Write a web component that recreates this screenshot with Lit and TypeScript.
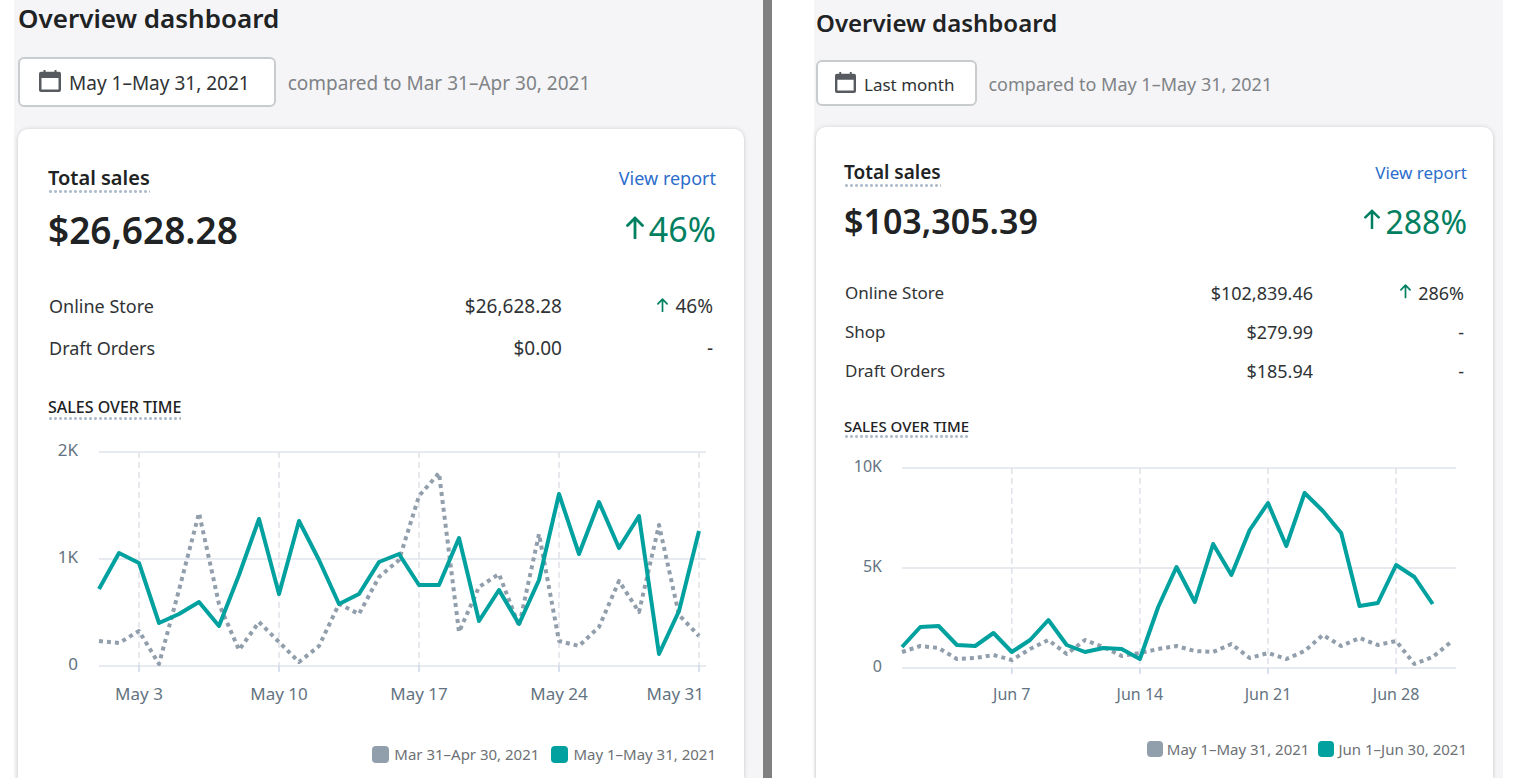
import { LitElement, html, svg, css } from "lit";
import { customElement, property } from "lit/decorators.js";
import { classMap } from "lit/directives/class-map.js";

interface Row {
  channel: string;
  amount: string;
  change?: string;
}

interface ChartData {
  width: number;
  height: number;
  left: number;
  right: number;
  top: number;
  bottom: number;
  firstX: number;
  step: number;
  labelX: number;
  labelSize: number;
  yLabels: string[];
  ticks: { day: number; label: string; atEnd?: boolean }[];
  // Heights above the baseline, one per day.
  current: number[];
  previous: number[];
}

interface Report {
  size: "large" | "small";
  range: string;
  comparedTo: string;
  total: string;
  change: string;
  rows: Row[];
  previousLabel: string;
  currentLabel: string;
  chart: ChartData;
}

const reports: Report[] = [
  {
    size: "large",
    range: "May 1–May 31, 2021",
    comparedTo: "compared to Mar 31–Apr 30, 2021",
    total: "$26,628.28",
    change: "46%",
    rows: [
      { channel: "Online Store", amount: "$26,628.28", change: "46%" },
      { channel: "Draft Orders", amount: "$0.00" },
    ],
    previousLabel: "Mar 31–Apr 30, 2021",
    currentLabel: "May 1–May 31, 2021",
    chart: {
      width: 668,
      height: 270,
      left: 51,
      right: 658,
      top: 14,
      bottom: 228,
      firstX: 51,
      step: 20,
      labelX: 30,
      labelSize: 17,
      yLabels: ["2K", "1K", "0"],
      ticks: [
        { day: 3, label: "May 3" },
        { day: 10, label: "May 10" },
        { day: 17, label: "May 17" },
        { day: 24, label: "May 24" },
        { day: 31, label: "May 31", atEnd: true },
      ],
      current: [
        77, 113, 103, 43, 52, 64, 40, 91, 147, 72, 145, 106, 62, 72, 104, 112,
        81, 81, 128, 45, 76, 42, 86, 172, 112, 164, 118, 150, 12, 55, 135,
      ],
      previous: [
        25, 23, 35, 2, 76, 153, 62, 16, 44, 24, 4, 20, 62, 52, 89, 106, 170,
        193, 34, 79, 92, 40, 132, 25, 20, 39, 85, 54, 141, 51, 30,
      ],
    },
  },
  {
    size: "small",
    range: "Last month",
    comparedTo: "compared to May 1–May 31, 2021",
    total: "$103,305.39",
    change: "288%",
    rows: [
      { channel: "Online Store", amount: "$102,839.46", change: "286%" },
      { channel: "Shop", amount: "$279.99" },
      { channel: "Draft Orders", amount: "$185.94" },
    ],
    previousLabel: "May 1–May 31, 2021",
    currentLabel: "Jun 1–Jun 30, 2021",
    chart: {
      width: 623,
      height: 250,
      left: 58,
      right: 612,
      top: 13,
      bottom: 213,
      firstX: 58,
      step: 18.3,
      labelX: 38,
      labelSize: 16,
      yLabels: ["10K", "5K", "0"],
      ticks: [
        { day: 7, label: "Jun 7" },
        { day: 14, label: "Jun 14" },
        { day: 21, label: "Jun 21" },
        { day: 28, label: "Jun 28" },
      ],
      current: [
        21, 41, 42, 23, 22, 35, 16, 28, 48, 23, 16, 20, 19, 9, 61, 101, 66,
        124, 93, 138, 165, 122, 175, 157, 135, 62, 65, 103, 91, 64,
      ],
      previous: [
        16, 22, 20, 9, 10, 13, 8, 19, 28, 14, 28, 21, 12, 15, 19, 22, 17, 16,
        24, 10, 15, 9, 17, 33, 22, 30, 23, 27, 4, 11, 26,
      ],
    },
  },
];

const calendarIcon = svg`<svg class="calendar" viewBox="0 0 22 22" aria-hidden="true">
  <path fill="currentColor" fill-rule="evenodd"
    d="M4.500 0H6.500V1.800H15.500V0H17.500V1.800H20A2 2 0 0 1 22 3.800V20A2 2 0 0 1 20 22H2A2 2 0 0 1 0 20V3.800A2 2 0 0 1 2 1.800H4.500ZM2.500 8V19.500H19.500V8Z"/>
</svg>`;

const arrowIcon = svg`<svg class="arrow" viewBox="0 0 18 23" aria-hidden="true">
  <path d="M9 22V2M1.500 9.500L9 2L16.500 9.500" fill="none" stroke="currentColor"
    stroke-width="2.800" stroke-linejoin="round" stroke-linecap="round"/>
</svg>`;

@customElement("sales-chart")
export class SalesChart extends LitElement {
  @property({ attribute: false }) data!: ChartData;

  static styles = css`
    :host {
      display: block;
    }
    .plot {
      display: block;
      width: 100%;
      height: auto;
      overflow: visible;
    }
    .label {
      font-family: "Noto Sans", "Open Sans", sans-serif;
      fill: #637381;
    }
    .grid {
      stroke: #dfe3ea;
      stroke-width: 1.5;
    }
    .guide {
      stroke: #dfe1e8;
      stroke-width: 1.5;
      stroke-dasharray: 6 4;
    }
    .tick {
      stroke: #ccd6eb;
      stroke-width: 1.5;
    }
    .line {
      fill: none;
      stroke-width: 4;
      stroke-linejoin: round;
    }
    .current {
      stroke: #00a19f;
    }
    .previous {
      stroke: #919eab;
      stroke-dasharray: 4 4;
    }
  `;

  private x(day: number) {
    return this.data.firstX + (day - 1) * this.data.step;
  }

  private points(values: number[]) {
    return values
      .map((v, i) => `${this.x(i + 1).toFixed(1)},${this.data.bottom - v}`)
      .join(" ");
  }

  render() {
    const d = this.data;
    const rowGap = (d.bottom - d.top) / (d.yLabels.length - 1);
    return html`
      <svg class="plot" viewBox="0 0 ${d.width} ${d.height}" role="img" aria-label="Sales over time">
        ${d.yLabels.map((label, i) => {
          const y = d.top + i * rowGap;
          return svg`
            <line class="grid" x1=${d.left} x2=${d.right} y1=${y} y2=${y} />
            <text class="label" font-size=${d.labelSize} text-anchor="end"
              x=${d.labelX} y=${y + 4}>${label}</text>`;
        })}
        ${d.ticks.map(
          (t) => svg`
            <line class="guide" x1=${this.x(t.day)} x2=${this.x(t.day)} y1=${d.top} y2=${d.bottom} />
            <line class="tick" x1=${this.x(t.day)} x2=${this.x(t.day)} y1=${d.bottom} y2=${d.bottom + 6} />
            <text class="label" font-size=${d.labelSize}
              text-anchor=${t.atEnd ? "end" : "middle"}
              x=${t.atEnd ? this.x(t.day) + 5 : this.x(t.day)}
              y=${d.bottom + d.labelSize * 2}>${t.label}</text>`
        )}
        <polyline class="line previous" points=${this.points(d.previous)} />
        <polyline class="line current" points=${this.points(d.current)} />
      </svg>
    `;
  }
}

@customElement("report-panel")
export class ReportPanel extends LitElement {
  @property({ attribute: false }) report!: Report;

  static styles = css`
    :host {
      display: flex;
      min-width: 0;
    }
    .panel {
      flex: 1;
      min-width: 0;
      box-sizing: border-box;
      display: flex;
      flex-direction: column;
      background: #f5f5f8;
      color: #202223;
    }
    .large {
      --text: 18px;
      --number: 19px;
      --button-text: 19px;
      --compared: 19px;
      --title: 26px;
      --heading: 20px;
      --total: 37px;
      --change: 34px;
      --caption: 16px;
      --legend: 15px;
      --row: 42px;
      --icon: 22px;
      --button: 50px;
      --swatch: 17px;
      --arrow: 18px;
      padding: 0 19px 0 4px;
    }
    .small {
      --text: 17px;
      --number: 18px;
      --button-text: 17px;
      --compared: 18px;
      --title: 24px;
      --heading: 19px;
      --total: 34px;
      --change: 32px;
      --caption: 15px;
      --legend: 15px;
      --row: 39px;
      --icon: 21px;
      --button: 46px;
      --swatch: 16px;
      --arrow: 16px;
      padding: 5px 10px 0 2px;
    }
    .title {
      margin: 0;
      font-size: var(--title);
      line-height: 36px;
      font-weight: 600;
    }
    .filters {
      display: flex;
      align-items: center;
      gap: 12px;
      margin-top: 21px;
      white-space: nowrap;
    }
    .small .filters {
      gap: 11px;
      margin-top: 19px;
    }
    .range {
      box-sizing: border-box;
      height: var(--button);
      display: flex;
      align-items: center;
      gap: 8px;
      padding: 2px 24px 0 19px;
      border: 2px solid #c9cccf;
      border-radius: 6px;
      background: #fff;
      font: inherit;
      font-size: var(--button-text);
      color: #303335;
    }
    .small .range {
      padding: 2px 21px 0 17px;
    }
    .calendar {
      width: var(--icon);
      height: var(--icon);
      color: #575b5f;
      margin-bottom: 4px;
    }
    .compared {
      padding-top: 2px;
      font-size: var(--compared);
      color: #7f8386;
    }
    .card {
      flex: 1;
      margin-top: 22px;
      padding: 33px 28px 12px 30px;
      background: #fff;
      border-radius: 10px 10px 0 0;
      box-shadow: 0 0 5px rgba(23, 24, 24, 0.12), 0 1px 3px rgba(0, 0, 0, 0.1);
    }
    .small .card {
      margin-top: 21px;
      padding: 31px 26px 12px 28px;
    }
    .head {
      display: flex;
      justify-content: space-between;
      align-items: center;
    }
    .heading,
    .caption {
      margin: 0;
      background: radial-gradient(circle, #aebccb 1px, transparent 2px) 0 100% / 5px 3px repeat-x;
    }
    .heading {
      font-size: var(--heading);
      line-height: 31px;
      font-weight: 600;
    }
    .small .heading {
      line-height: 29px;
    }
    .link {
      color: #2c6ecb;
      font-size: var(--text);
      text-decoration: none;
    }
    .totals {
      display: flex;
      justify-content: space-between;
      align-items: center;
      height: 72px;
    }
    .small .totals {
      height: 68px;
    }
    .total {
      font-size: var(--total);
      font-weight: 600;
    }
    .change {
      display: flex;
      align-items: center;
      gap: 5px;
      font-size: var(--change);
      color: #008060;
    }
    .change .arrow {
      width: var(--arrow);
      margin-bottom: 4px;
    }
    .rows {
      width: 100%;
      margin-top: 20px;
      border-collapse: collapse;
      font-size: var(--text);
      color: #303335;
    }
    .small .rows {
      margin-top: 18px;
    }
    .rows th,
    .rows td {
      height: var(--row);
      padding: 0 3px 0 1px;
      font-weight: 400;
      text-align: right;
      line-height: 24px;
    }
    .rows td {
      font-size: var(--number);
    }
    .rows th {
      text-align: left;
    }
    .rows .delta {
      width: 147px;
    }
    .delta .arrow {
      width: 11px;
      margin-right: 7px;
      color: #008060;
      vertical-align: 1px;
    }
    .caption {
      width: max-content;
      margin-top: 26px;
      font-size: var(--caption);
      line-height: 25px;
      font-weight: 500;
    }
    .small .caption {
      margin-top: 24px;
      line-height: 24px;
    }
    .chart {
      margin-top: 18px;
    }
    .small .chart {
      margin-top: 17px;
    }
    .legend {
      display: flex;
      justify-content: flex-end;
      gap: 12px;
      margin: 34px 0 0;
      padding: 0;
      list-style: none;
      font-size: var(--legend);
      line-height: 24px;
      color: #6d7175;
      white-space: nowrap;
    }
    .small .legend {
      margin-top: 32px;
      gap: 9px;
    }
    .key {
      display: flex;
      align-items: center;
      gap: 5px;
    }
    .small .key {
      gap: 4px;
    }
    .swatch {
      width: var(--swatch);
      height: var(--swatch);
      border-radius: 4px;
      background: #919eab;
    }
    .now {
      background: #00a19f;
    }
  `;

  render() {
    const r = this.report;
    return html`
      <section class=${classMap({ panel: true, [r.size]: true })}>
        <h1 class="title">Overview dashboard</h1>
        <div class="filters">
          <button class="range" type="button">${calendarIcon}<span>${r.range}</span></button>
          <span class="compared">${r.comparedTo}</span>
        </div>
        <article class="card">
          <div class="head">
            <h2 class="heading">Total sales</h2>
            <a class="link" href="#report">View report</a>
          </div>
          <div class="totals">
            <span class="total">${r.total}</span>
            <span class="change">${arrowIcon}<span>${r.change}</span></span>
          </div>
          <table class="rows">
            <tbody>
              ${r.rows.map(
                (row) => html`<tr>
                  <th scope="row">${row.channel}</th>
                  <td>${row.amount}</td>
                  <td class="delta">${row.change ? html`${arrowIcon}${row.change}` : "-"}</td>
                </tr>`
              )}
            </tbody>
          </table>
          <h3 class="caption">SALES OVER TIME</h3>
          <sales-chart class="chart" .data=${r.chart}></sales-chart>
          <ul class="legend">
            <li class="key"><span class="swatch"></span>${r.previousLabel}</li>
            <li class="key"><span class="swatch now"></span>${r.currentLabel}</li>
          </ul>
        </article>
      </section>
    `;
  }
}

@customElement("app-root")
export class AppRoot extends LitElement {
  static styles = css`
    :host {
      display: block;
      height: 100vh;
      overflow: hidden;
      background: #fff;
      font-family: "Noto Sans", "Open Sans", sans-serif;
    }
    .compare {
      display: grid;
      grid-template-columns: minmax(0, 749fr) 9px minmax(0, 731fr);
      min-height: 100vh;
      padding: 0 33px 0 14px;
    }
    .divider {
      background: #808080;
    }
    .after {
      margin-left: 42px;
    }
  `;

  render() {
    return html`
      <main class="compare">
        <report-panel .report=${reports[0]}></report-panel>
        <div class="divider"></div>
        <report-panel class="after" .report=${reports[1]}></report-panel>
      </main>
    `;
  }
}
